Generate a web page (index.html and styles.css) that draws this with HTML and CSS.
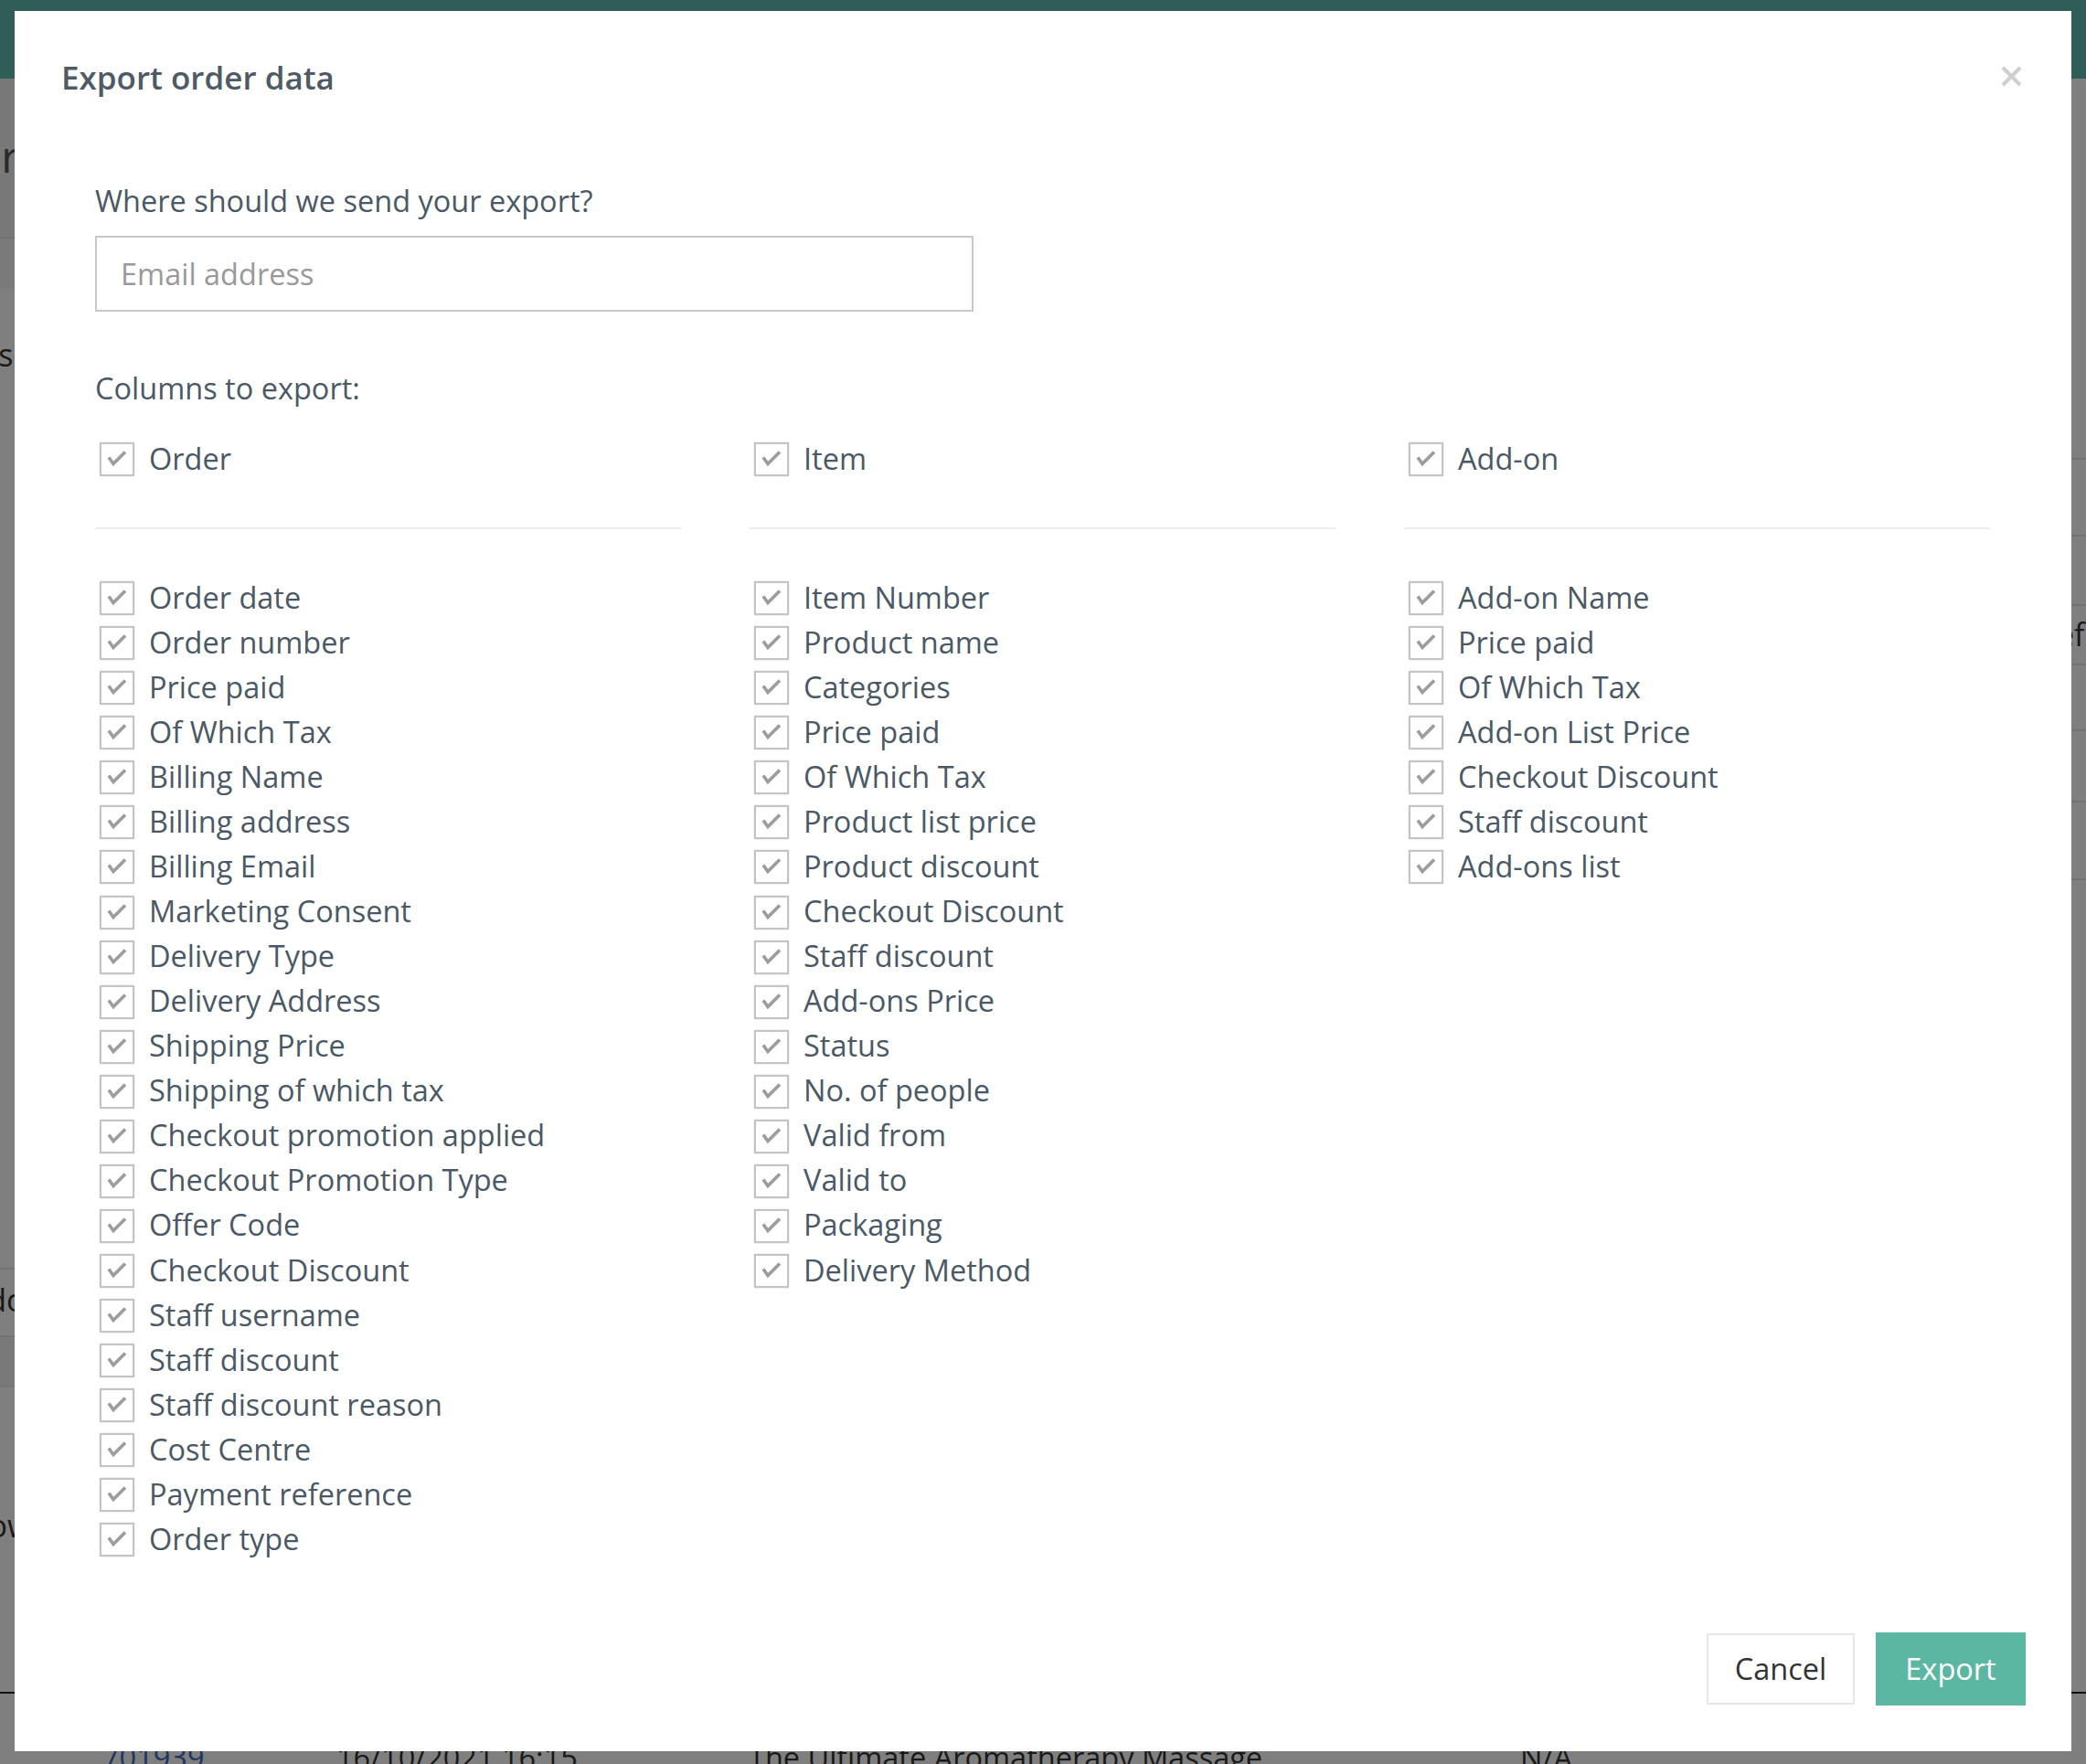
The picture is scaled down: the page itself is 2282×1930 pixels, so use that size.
FILE: index.html
```html
<!DOCTYPE html>
<html lang="en">
<head>
<meta charset="utf-8">
<title>Export order data</title>
<link rel="stylesheet" href="styles.css">
</head>
<body>
<svg class="defs" width="0" height="0" aria-hidden="true">
  <symbol id="chk" viewBox="0 0 38 37">
    <path d="M10 16.5 L15 23.5 L28 10.5" fill="none" stroke="#9c9c9c" stroke-width="3.6" stroke-linecap="butt" stroke-linejoin="miter"/>
  </symbol>
</svg>

<div class="page">
  <div class="topbar"></div>
  <div class="bg-body">
    <div class="bg-left">
      <div class="bl-a"><span class="bl-title">Orders</span></div>
      <div class="bl-b"></div>
      <div class="bl-c"><span class="bl-text">Items</span></div>
      <div class="bl-d"><span class="bl-text">Vendor</span></div>
      <div class="bl-e"></div>
      <div class="bl-f"><span class="bl-text2">Show</span></div>
    </div>
    <div class="bg-mid"></div>
    <div class="bg-right">
      <div class="br-a"></div>
      <div class="br-b"></div>
      <div class="br-c"></div>
      <div class="br-d"><span class="br-text">ef</span></div>
      <div class="br-e"></div>
      <div class="br-f"></div>
      <div class="br-g"></div>
    </div>
  </div>
  <div class="bg-row">
    <span class="bg-id">701939</span>
    <span class="bg-date">16/10/2021 16:15</span>
    <span class="bg-name">The Ultimate Aromatherapy Massage</span>
    <span class="bg-na">N/A</span>
  </div>
</div>
<div class="overlay"></div>

<div class="modal" role="dialog">
  <div class="modal-header">
    <h2 class="modal-title">Export order data</h2>
    <button class="close" aria-label="Close">
      <svg viewBox="0 0 23 23" width="23" height="23"><path d="M2 2 L21 21 M21 2 L2 21" stroke="#cfcfcf" stroke-width="4"/></svg>
    </button>
  </div>

  <div class="modal-body">
    <label class="field-label" for="email">Where should we send your export?</label>
    <input id="email" class="email" type="text" placeholder="Email address">

    <p class="cols-label">Columns to export:</p>

    <div class="cols">
      <div class="col">
        <div class="row head"><span class="cb"><svg><use href="#chk"/></svg></span>Order</div>
        <hr class="divider">
        <ul class="list">
          <li class="row"><span class="cb"><svg><use href="#chk"/></svg></span>Order date</li>
          <li class="row"><span class="cb"><svg><use href="#chk"/></svg></span>Order number</li>
          <li class="row"><span class="cb"><svg><use href="#chk"/></svg></span>Price paid</li>
          <li class="row"><span class="cb"><svg><use href="#chk"/></svg></span>Of Which Tax</li>
          <li class="row"><span class="cb"><svg><use href="#chk"/></svg></span>Billing Name</li>
          <li class="row"><span class="cb"><svg><use href="#chk"/></svg></span>Billing address</li>
          <li class="row"><span class="cb"><svg><use href="#chk"/></svg></span>Billing Email</li>
          <li class="row"><span class="cb"><svg><use href="#chk"/></svg></span>Marketing Consent</li>
          <li class="row"><span class="cb"><svg><use href="#chk"/></svg></span>Delivery Type</li>
          <li class="row"><span class="cb"><svg><use href="#chk"/></svg></span>Delivery Address</li>
          <li class="row"><span class="cb"><svg><use href="#chk"/></svg></span>Shipping Price</li>
          <li class="row"><span class="cb"><svg><use href="#chk"/></svg></span>Shipping of which tax</li>
          <li class="row"><span class="cb"><svg><use href="#chk"/></svg></span>Checkout promotion applied</li>
          <li class="row"><span class="cb"><svg><use href="#chk"/></svg></span>Checkout Promotion Type</li>
          <li class="row"><span class="cb"><svg><use href="#chk"/></svg></span>Offer Code</li>
          <li class="row"><span class="cb"><svg><use href="#chk"/></svg></span>Checkout Discount</li>
          <li class="row"><span class="cb"><svg><use href="#chk"/></svg></span>Staff username</li>
          <li class="row"><span class="cb"><svg><use href="#chk"/></svg></span>Staff discount</li>
          <li class="row"><span class="cb"><svg><use href="#chk"/></svg></span>Staff discount reason</li>
          <li class="row"><span class="cb"><svg><use href="#chk"/></svg></span>Cost Centre</li>
          <li class="row"><span class="cb"><svg><use href="#chk"/></svg></span>Payment reference</li>
          <li class="row"><span class="cb"><svg><use href="#chk"/></svg></span>Order type</li>
        </ul>
      </div>

      <div class="col">
        <div class="row head"><span class="cb"><svg><use href="#chk"/></svg></span>Item</div>
        <hr class="divider">
        <ul class="list">
          <li class="row"><span class="cb"><svg><use href="#chk"/></svg></span>Item Number</li>
          <li class="row"><span class="cb"><svg><use href="#chk"/></svg></span>Product name</li>
          <li class="row"><span class="cb"><svg><use href="#chk"/></svg></span>Categories</li>
          <li class="row"><span class="cb"><svg><use href="#chk"/></svg></span>Price paid</li>
          <li class="row"><span class="cb"><svg><use href="#chk"/></svg></span>Of Which Tax</li>
          <li class="row"><span class="cb"><svg><use href="#chk"/></svg></span>Product list price</li>
          <li class="row"><span class="cb"><svg><use href="#chk"/></svg></span>Product discount</li>
          <li class="row"><span class="cb"><svg><use href="#chk"/></svg></span>Checkout Discount</li>
          <li class="row"><span class="cb"><svg><use href="#chk"/></svg></span>Staff discount</li>
          <li class="row"><span class="cb"><svg><use href="#chk"/></svg></span>Add-ons Price</li>
          <li class="row"><span class="cb"><svg><use href="#chk"/></svg></span>Status</li>
          <li class="row"><span class="cb"><svg><use href="#chk"/></svg></span>No. of people</li>
          <li class="row"><span class="cb"><svg><use href="#chk"/></svg></span>Valid from</li>
          <li class="row"><span class="cb"><svg><use href="#chk"/></svg></span>Valid to</li>
          <li class="row"><span class="cb"><svg><use href="#chk"/></svg></span>Packaging</li>
          <li class="row"><span class="cb"><svg><use href="#chk"/></svg></span>Delivery Method</li>
        </ul>
      </div>

      <div class="col">
        <div class="row head"><span class="cb"><svg><use href="#chk"/></svg></span>Add-on</div>
        <hr class="divider">
        <ul class="list">
          <li class="row"><span class="cb"><svg><use href="#chk"/></svg></span>Add-on Name</li>
          <li class="row"><span class="cb"><svg><use href="#chk"/></svg></span>Price paid</li>
          <li class="row"><span class="cb"><svg><use href="#chk"/></svg></span>Of Which Tax</li>
          <li class="row"><span class="cb"><svg><use href="#chk"/></svg></span>Add-on List Price</li>
          <li class="row"><span class="cb"><svg><use href="#chk"/></svg></span>Checkout Discount</li>
          <li class="row"><span class="cb"><svg><use href="#chk"/></svg></span>Staff discount</li>
          <li class="row"><span class="cb"><svg><use href="#chk"/></svg></span>Add-ons list</li>
        </ul>
      </div>
    </div>
  </div>

  <div class="modal-footer">
    <button class="btn btn-cancel">Cancel</button>
    <button class="btn btn-export">Export</button>
  </div>
</div>
</body>
</html>
```

FILE: styles.css
```css
* { box-sizing: border-box; }

html, body {
  margin: 0;
  padding: 0;
}

body {
  width: 2282px;
  height: 1930px;
  overflow: hidden;
  position: relative;
  background: #fff;
  font-family: "Open Sans", "Noto Sans", "DejaVu Sans", sans-serif;
  color: #4b5866;
}

.defs { position: absolute; }

/* ---------- background page ---------- */
.page {
  width: 2282px;
  height: 1930px;
}

.topbar {
  height: 86px;
  background: #5ebab0;
}

.bg-body {
  height: 1767px;
  display: flex;
  border-bottom: 2px solid #222;
}

.bg-left {
  width: 300px;
  display: flex;
  flex-direction: column;
}
.bl-a {
  height: 175px;
  background: #f0f0f0;
  border-bottom: 2px solid #e2e2e2;
  padding: 52px 0 0 0;
  overflow: hidden;
}
.bl-title {
  display: block;
  margin-left: -112px;
  font-size: 48px;
  color: #555;
}
.bl-b {
  height: 54px;
  background: #f5f5f5;
}
.bl-c {
  height: 1074px;
  background: #fff;
  border-bottom: 2px solid #e6e6e6;
  overflow: hidden;
  padding-top: 50px;
}
.bl-text {
  display: block;
  margin-left: -74px;
  font-size: 34px;
  color: #333;
}
.bl-d {
  height: 74px;
  border-bottom: 2px solid #e6e6e6;
  overflow: hidden;
  padding-top: 10px;
}
.bl-e {
  height: 55px;
  background: #f2f2f2;
}
.bl-f {
  flex: 1;
  overflow: hidden;
  padding-top: 128px;
}
.bl-text2 {
  display: block;
  margin-left: -52px;
  font-size: 34px;
  color: #333;
}

.bg-mid { flex: 1; }

.bg-right {
  width: 300px;
  display: flex;
  flex-direction: column;
}
.bg-right > div { border-bottom: 2px solid #e6e6e6; }
.br-a { height: 417px; }
.br-b { height: 84px; }
.br-c { height: 76px; }
.br-d { height: 65px; overflow: hidden; padding-top: 8px; }
.br-text {
  display: block;
  font-size: 34px;
  color: #333;
  padding-left: 268px;
}
.br-e { height: 72px; }
.br-f { height: 78px; }
.br-g { height: 85px; }

.bg-row {
  display: flex;
  align-items: baseline;
  padding-top: 47px;
  font-size: 32.5px;
  line-height: 46px;
  color: #333;
  white-space: nowrap;
}
.bg-id { margin-left: 112px; width: 256px; color: #3d6cc0; }
.bg-date { width: 451px; }
.bg-name { width: 844px; }

.overlay {
  position: fixed;
  inset: 0;
  background: rgba(0, 0, 0, 0.5);
}

/* ---------- modal ---------- */
.modal {
  position: absolute;
  left: 16px;
  top: 12px;
  width: 2250px;
  height: 1904px;
  background: #fff;
  display: flex;
  flex-direction: column;
}

.modal-header {
  display: flex;
  justify-content: space-between;
  align-items: flex-start;
  padding: 50px 54px 0 51px;
}

.modal-title {
  margin: 0;
  font-size: 35px;
  line-height: 46px;
  font-weight: 600;
  color: #4e5a66;
}

.close {
  width: 23px;
  height: 23px;
  margin-top: 10px;
  padding: 0;
  border: 0;
  background: none;
  display: block;
}
.close svg { display: block; }

.modal-body {
  flex: 1;
  padding: 90px 89px 0 88px;
}

.field-label {
  display: block;
  font-size: 32.5px;
  line-height: 44px;
  color: #4b5866;
  margin-bottom: 16px;
}

.email {
  display: block;
  width: 961px;
  height: 83px;
  border: 2px solid #c5c9cc;
  border-radius: 0;
  padding: 0 26px;
  font-family: inherit;
  font-size: 32.5px;
  color: #4b5866;
  outline: none;
}
.email::placeholder { color: #999; }

.cols-label {
  margin: 62px 0 0;
  font-size: 32.5px;
  line-height: 44px;
  color: #4b5866;
}

.cols {
  margin-top: 30px;
  display: grid;
  grid-template-columns: repeat(3, 641px);
  column-gap: 75px;
  align-items: start;
}

.row {
  display: flex;
  align-items: center;
  height: 49.07px;
  font-size: 32.5px;
  line-height: 44px;
  color: #4b5866;
  white-space: nowrap;
}

.cb {
  flex: none;
  width: 38px;
  height: 37px;
  margin: 2px 16px 0 5px;
  border: 2px solid #c4c4c4;
  box-shadow: 0 0 1.5px #cfcfcf;
  background: #fff;
  position: relative;
}
.cb svg {
  position: absolute;
  left: -2px;
  top: -2px;
  width: 38px;
  height: 37px;
}

.divider {
  margin: 51px 0 0;
  border: 0;
  height: 2px;
  background: #ececec;
}

.list {
  list-style: none;
  margin: 50px 0 0;
  padding: 0;
}

/* ---------- footer ---------- */
.modal-footer {
  display: flex;
  justify-content: flex-end;
  align-items: center;
  gap: 23px;
  padding: 0 50px 50px 0;
}

.btn {
  font-family: inherit;
  font-size: 32.5px;
  line-height: 44px;
  padding: 0;
  cursor: pointer;
}

.btn-cancel {
  width: 162px;
  height: 78px;
  background: #fff;
  border: 2px solid #e6e6e6;
  color: #333;
}

.btn-export {
  width: 164px;
  height: 80px;
  background: #5bb7a2;
  border: 0;
  color: #fff;
}
```
